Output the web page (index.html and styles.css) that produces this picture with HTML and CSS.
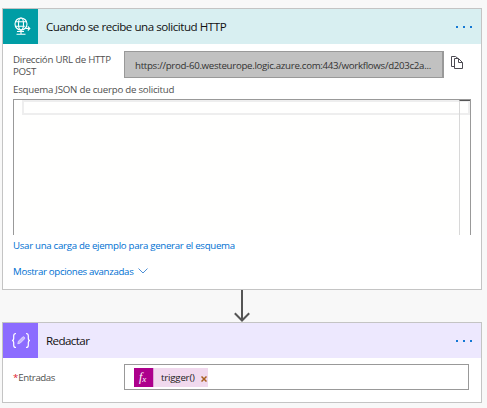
FILE: index.html
```html
<!DOCTYPE html>
<html lang="es">
<head>
<meta charset="utf-8">
<title>Flujo</title>
<link rel="stylesheet" href="styles.css">
</head>
<body>
<section class="card trigger">
  <header class="head">
    <span class="icon"><svg width="35" height="35" viewBox="0 0 35 35" fill="none" stroke="#fff" stroke-width="1.100">
      <circle cx="18" cy="15" r="6"/><ellipse cx="18" cy="15" rx="2.500" ry="6"/><path d="M12.300 12.700h11.400M12.300 17.200h9.500M18 21v4M14 22.500h7M13.500 25.200h9M22.500 19.500h4M24.800 17.500l2 2-2 2"/></svg></span>
    <h2 class="t-title">Cuando se recibe una solicitud HTTP</h2>
    <span class="dots"><i></i><i></i><i></i></span>
  </header>
  <div class="url-row">
    <label class="t-label">Dirección URL de HTTP POST</label>
    <div class="url">https://prod-60.westeurope.logic.azure.com:443/workflows/d203c2a...</div>
    <svg class="copy" width="13" height="14" viewBox="0 0 13 14" fill="none" stroke="#4c4a52"><path d="M3.500 10.500h-3V.5h4l2.500 2M3.500 2.500h4l4 4v6h-8zM7.500 2.500v4h4"/></svg>
  </div>
  <div class="schema-label">Esquema JSON de cuerpo de solicitud</div>
  <div class="editor"><div class="line"></div><div class="ruler"></div></div>
  <a class="link sample">Usar una carga de ejemplo para generar el esquema</a>
  <a class="link more"><span>Mostrar opciones avanzadas</span><svg width="10" height="6" viewBox="0 0 10 6" fill="none" stroke="#4d8fd6"><path d="M.5.5L5 5 9.500.5"/></svg></a>
</section>
<svg class="arrow" width="16" height="32" viewBox="0 0 16 32" fill="none" stroke="#555"><path stroke-width="2" d="M8 0v31M.8 23.300L8 30.500l7.200-7.200"/></svg>
<section class="card compose">
  <header class="head">
    <span class="icon"><svg width="35" height="35" viewBox="0 0 35 35" fill="none" stroke="#fff" stroke-width="1.200"><path d="M13 10.500c-2 0-2.300.7-2.300 2.300v2.400c0 1.500-.5 2.300-1.700 2.300 1.200 0 1.700.8 1.700 2.300v2.400c0 1.600.3 2.300 2.300 2.300M23 10.500c2 0 2.300.7 2.300 2.300v2.400c0 1.500.5 2.300 1.700 2.300-1.200 0-1.700.8-1.700 2.300v2.400c0 1.600-.3 2.300-2.300 2.300"/><path stroke="#ded4ff" stroke-width="1" fill="#c9b9ff" d="M14.800 20.800l.7-2.600 4.200-4.200c1.200-.8 2.600.6 1.800 1.800l-4.200 4.200z"/></svg></span>
    <h2 class="t-compose">Redactar</h2>
    <span class="dots"><i></i><i></i><i></i></span>
  </header>
  <div class="input-row">
    <label><b>*</b><span class="t-inputs">Entradas</span></label>
    <div class="input"><div class="token"><span class="fx">f<small>x</small></span><span class="t-token">trigger()</span><svg width="6" height="6" viewBox="0 0 6 6" stroke="#a86020" stroke-width="1.500"><path d="M.5.5l5 5M5.500.5l-5 5"/></svg></div></div>
  </div>
</section>
</body>
</html>
```
FILE: styles.css
```css
* { box-sizing: border-box; }
body {
  margin: 0;
  padding: 8px 0 0 2px;
  height: 408px;
  overflow: hidden;
  background: #f8f8f8;
  font: 9.7px/12px "Open Sans", "Noto Sans", sans-serif;
  color: #505050;
}
.card { width: 480px; border: 1px solid #c4c4c4; background: #fff; }
.trigger { height: 282px; }
.compose { height: 81px; }
.head { display: flex; align-items: center; height: 35px; padding-right: 9px; }
.trigger .head { background: #d8eff1; }
.compose .head { background: #ede8fe; }
.icon { width: 35px; height: 35px; background: #009da5; }
.compose .icon { background: #8c6cff; }
.icon svg { display: block; }
h2 { flex: 1; margin: 0 0 0 8px; font-size: 11.6px; line-height: 16px; font-weight: 400; color: #111; white-space: nowrap; }
.t-title { letter-spacing: -.47px; }
.t-compose { padding-top: 1px; letter-spacing: -.6px; }
.dots { display: flex; gap: 5px; width: 16px; }
.dots i { width: 2px; height: 2px; background: #1478d4; }
.url-row { display: flex; height: 34px; padding: 7px 0 0 10px; }
label { width: 111px; }
.t-label { padding-top: 3px; letter-spacing: -.25px; }
.url { width: 320px; height: 27px; padding: 0 0 0 10px; border: 1px solid #999; border-right-width: 2px; background: #c1c1c1; color: #333; line-height: 27px; white-space: nowrap; letter-spacing: -.3px; }
.copy { margin: 5px 0 0 7px; }
.schema-label { height: 21px; padding: 6px 0 0 10px; letter-spacing: -.23px; }
.editor { display: flex; width: 458px; height: 136px; margin-left: 10px; border: 1px solid #999; border-bottom: 0; background: #fffffe; padding-left: 8px; }
.line { flex: 1; height: 15px; border: 2px solid #eee; }
.ruler { width: 11px; margin-left: -11px; border-left: 1px solid #d8d8d8; border-top: 1px solid #555; }
.link { display: flex; align-items: center; height: 14px; margin-left: 10px; color: #0070d2; }
.sample { margin-top: 4px; letter-spacing: -.3px; }
.more { margin-top: 12px; gap: 5px; letter-spacing: -.33px; }
.more svg { margin-top: -3px; }
.arrow { display: block; margin-left: 232px; }
.input-row { display: flex; padding: 6px 0 0 10px; }
.input-row label { padding-top: 8px; }
b { font-weight: 400; color: #e02030; }
.t-inputs { letter-spacing: -.42px; }
.input { width: 345px; height: 26px; border: 1px solid #999; padding: 3px 9px; }
.token { display: flex; align-items: center; width: 74px; height: 19px; background: #f1d9ee; color: #222; }
.fx { width: 20px; height: 19px; padding-left: 5px; background: #ad008c; border-right: 1px solid #dda5d5; color: #fff; font: italic 12px/18px "Liberation Serif", serif; }
.fx small { font-size: 9px; position: relative; top: 1px; }
.t-token { width: 40px; margin-left: 7px; letter-spacing: -.2px; }
.token svg { margin-top: 3px; }
```
